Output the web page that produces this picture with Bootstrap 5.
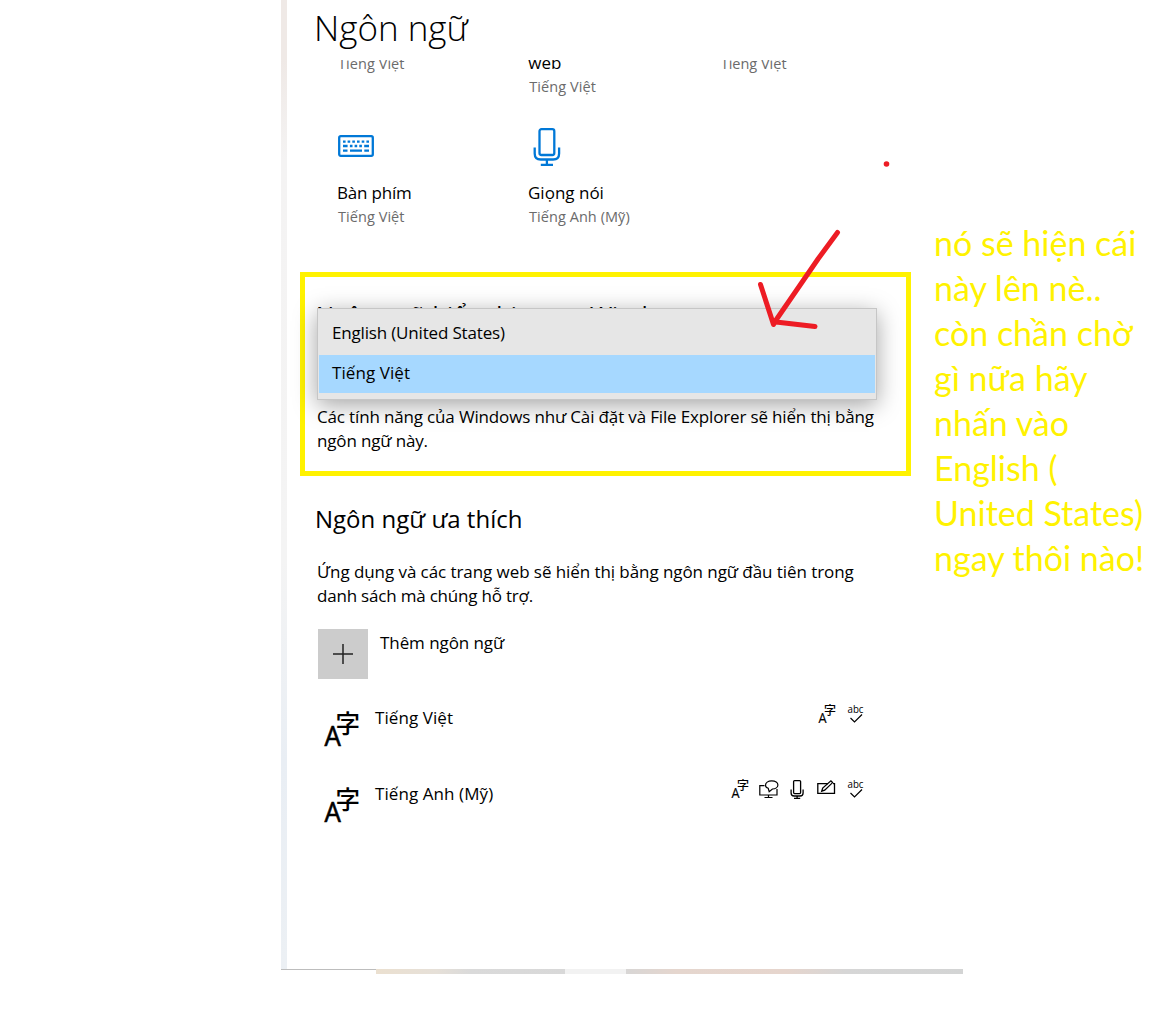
<!DOCTYPE html>
<html lang="vi">
<head>
<meta charset="utf-8">
<meta name="viewport" content="width=device-width, initial-scale=1">
<title>Ngôn ngữ</title>
<link href="https://cdn.jsdelivr.net/npm/bootstrap@5.3.0/dist/css/bootstrap.min.css" rel="stylesheet">
<style>
body{width:1152px;height:1035px;overflow:hidden;background:#fff;color:#000;font-family:"Open Sans","Noto Sans",sans-serif;font-size:17px;line-height:24px}
svg{display:block}
.shell{padding-left:281px;height:969px}
.edge{width:6px;background:linear-gradient(#efe9e6 0,#efe9e6 60px,#f4f3f3 160px,#f4f4f4 560px,#e9eef4 760px,#ecf0f4 100%)}
.pane{width:624px}
.title{height:60px;padding:1px 0 0 27px;font-size:35px;line-height:54px;font-weight:300}
.scroller{height:909px;overflow:hidden}
.tiles{padding-left:50px}
.tile{width:192px;white-space:nowrap;letter-spacing:-.2px}
.tile + .tile{margin-left:-1px;width:193px;letter-spacing:0}
.first-row{height:76px;margin-top:-8px}
.first-row .raised{margin:-1px 0 0 0;width:192px}
.first-row .far{padding-left:2px}
.sub{font-size:14.5px;color:#6b6b6b;letter-spacing:.06px;padding-left:1px}
.tile-icon{height:53px;padding-top:7px}
.tile-icon.tall{padding-top:0}
.frame{margin:43px 0 0 13px;width:611px;height:204px;border:5px solid #fff200;padding:20px 0 0 11px}
.section-title{font-size:24px;line-height:36px;font-weight:400;margin:0}
.about{margin:72px 0 0 1px;letter-spacing:-.155px;white-space:nowrap}
.dropbox{left:12px;top:31px;width:560px;height:92px;background:#e6e6e6;border:1px solid #c6c6c6;box-shadow:0 5px 22px rgba(0,0,0,.36);padding:6px 1px 0}
.opt{height:38px;line-height:36px;padding-left:13px;letter-spacing:-.17px}
.opt.picked{background:#a6d8ff;margin-top:2px;letter-spacing:.08px}
.preferred{padding:25px 0 0 28px}
.lead-in{margin:23px 0 21px 2px;letter-spacing:-.07px}
.lead-in .tight{letter-spacing:-.2px}
.plus{width:50px;height:50px;background:#ccc}
.add-row{margin-left:3px;gap:12px}
.add-row span{padding-top:2px;letter-spacing:-.07px}
.lang-row{margin:25px 0 0 3px;height:50px;width:548px}
.lang-row + .lang-row{margin-top:26px}
.lang-row .lang-name{padding:2px 0 0 7px;letter-spacing:.08px}
.features{gap:9px}
.lang-row + .lang-row .features{margin-top:-1px}
.note{padding:220px 0 0 23px;width:241px;font-family:Lato,"Open Sans",sans-serif;font-size:34px;line-height:45px;color:#fff200;white-space:nowrap}
.base{padding-left:281px;height:5px}
.base-line{width:95px;height:1px;background:#bdbdbd}
.base-strip{width:587px;height:5px;background:linear-gradient(90deg,#ebe0d0 0,#e6e0d8 60px,#dadada 95px,#d8d8d8 189px,#f2f2f2 189px,#f2f2f2 250px,#d8d6d5 250px,#e5d6ce 300px,#e6d5cd 410px,#d6d6d6 470px,#d3d4d4 100%)}
.ink{left:0;top:0;pointer-events:none}
.cjk{font-family:"Noto Sans CJK JP",sans-serif}
</style>
<script src="https://cdn.jsdelivr.net/npm/bootstrap@5.3.0/dist/js/bootstrap.bundle.min.js"></script>
</head>
<body class="position-relative">
<svg class="d-none">
<symbol id="i-lang" viewBox="0 0 20 20"><text transform="translate(1.500 18.500) scale(.85 1)" font-size="15" stroke="#000" stroke-width=".2">A</text><text class="cjk" x="7" y="11" font-size="12" font-weight="500">字</text></symbol>
<symbol id="i-lang-big" viewBox="0 0 50 50"><text transform="translate(6.500 42) scale(.94 1)" font-size="27.500" stroke="#000" stroke-width=".6">A</text><text class="cjk" x="17.500" y="28.500" font-size="24.500" font-weight="500">字</text></symbol>
<symbol id="i-abc" viewBox="0 0 20 20"><text x="1.500" y="8.500" font-size="10.500" textLength="16" lengthAdjust="spacingAndGlyphs">abc</text><path d="M4.500 14l4 4 7.500-7.500" fill="none" stroke="#000" stroke-width="1.200"/></symbol>
<symbol id="i-speech" viewBox="0 0 20 20"><g fill="none" stroke="#000" stroke-width="1.200"><path d="M5.500 6.600H.8v9.400h17.200V10M9.500 16v2.200M5.500 18.500h8"/><path d="M9.200 9.300c-1.800-.6-2.700-1.600-2.700-3 0-2.400 2.500-4.400 6.200-4.400s6.200 1.800 6.200 4.100-2.400 4-5.500 4l-3.200 2.800z"/></g></symbol>
<symbol id="i-mic" viewBox="0 0 20 20"><g fill="none" stroke="#000" stroke-width="1.300"><rect x="5.600" y="1.600" width="7" height="13" rx="1"/><path d="M3.100 10.500v3.500q0 3 3 3h6q3 0 3-3v-3.500M9.100 17v2.400M6 19.300h6.200"/></g></symbol>
<symbol id="i-pen" viewBox="0 0 20 20"><g fill="none" stroke="#000" stroke-width="1.300"><path d="M11 4.600H.8v9.800h16.700V4.600h-1.500"/><path d="M4.700 12.200l1-3.200 8.200-7.200 1.700 1.800-7.900 7.600z"/></g></symbol>
</svg>
<div class="shell d-flex">
<div class="edge"></div>
<main class="pane">
<h1 class="title m-0">Ngôn ngữ</h1>
<div class="scroller">
<div class="tiles first-row d-flex">
<div class="tile sub">Tiếng Việt</div>
<div class="tile raised"><div>web</div><div class="sub">Tiếng Việt</div></div>
<div class="tile sub far">Tiếng Việt</div>
</div>
<div class="tiles d-flex">
<div class="tile"><div class="tile-icon"><svg width="38" height="22" viewBox="0 0 38 22" fill="none" stroke="#0078d7" stroke-width="2.300"><rect x="2.200" y="1.200" width="33.600" height="19.600" rx="1.500"/><path d="M6 6.600h2.600m2 0h2.600m2.100 0h2.600m2.100 0h2.600m2.100 0h2.600m2.100 0h2.600M6 11h4.600m2.300 0h2.600m2.100 0h2.600m2.100 0h2.600m2.300 0h4.800M6 15.700h4.500m2.500 0h12m2.300 0h4.700"/></svg></div><div>Bàn phím</div><div class="sub">Tiếng Việt</div></div>
<div class="tile"><div class="tile-icon tall"><svg width="36" height="40" viewBox="-.5 0 36 40" fill="none" stroke="#0078d7" stroke-width="2.300"><rect x="11" y="1.200" width="14.800" height="25.800" rx="2"/><path d="M6.200 19.500v6q0 6 6 6h12.400q6 0 6-6v-6M18.400 31.500v5M12.300 36.800h12.200"/></svg></div><div>Giọng nói</div><div class="sub">Tiếng Anh (Mỹ)</div></div>
</div>
<section class="frame position-relative">
<h2 class="section-title">Ngôn ngữ hiển thị trong Windows</h2>
<p class="about">Các tính năng của Windows như Cài đặt và File Explorer sẽ hiển thị bằng<br>ngôn ngữ này.</p>
<div class="dropbox position-absolute"><div class="opt">English (United States)</div><div class="opt picked">Tiếng Việt</div></div>
</section>
<section class="preferred">
<h2 class="section-title">Ngôn ngữ ưa thích</h2>
<p class="lead-in">Ứng dụng và các trang web sẽ hiển thị bằng ngôn ngữ đầu tiên trong<br><span class="tight">danh sách mà chúng hỗ trợ.</span></p>
<div class="add-row d-flex"><div class="plus"><svg width="50" height="50"><path d="M15 25h20M25 15v20" stroke="#222" stroke-width="1.500"/></svg></div><span>Thêm ngôn ngữ</span></div>
<div class="lang-row d-flex">
<svg width="50" height="50"><use href="#i-lang-big"/></svg><span class="lang-name">Tiếng Việt</span>
<div class="features d-flex ms-auto"><svg width="20" height="20"><use href="#i-lang"/></svg><svg width="20" height="20"><use href="#i-abc"/></svg></div>
</div>
<div class="lang-row d-flex">
<svg width="50" height="50"><use href="#i-lang-big"/></svg><span class="lang-name">Tiếng Anh (Mỹ)</span>
<div class="features d-flex ms-auto"><svg width="20" height="20"><use href="#i-lang"/></svg><svg width="20" height="20"><use href="#i-speech"/></svg><svg width="20" height="20"><use href="#i-mic"/></svg><svg width="20" height="20"><use href="#i-pen"/></svg><svg width="20" height="20"><use href="#i-abc"/></svg></div>
</div>
</section>
</div>
</main>
<aside class="note">nó sẽ hiện cái<br>này lên nè..<br>còn chần chờ<br>gì nữa hãy<br>nhấn vào<br>English (<br>United States)<br>ngay thôi nào!</aside>
</div>
<footer class="base d-flex"><div class="base-line"></div><div class="base-strip"></div></footer>
<svg class="ink position-absolute" width="1152" height="600" fill="none" stroke="#ed1c24" stroke-width="5" stroke-linecap="round"><path d="M837.500 232.500L818 259 774 323M760.500 284.500L773.500 324.500M776 322l39 4.500"/><circle cx="886.500" cy="164" r="2.800" fill="#ed1c24" stroke="none"/></svg>
</body>
</html>
